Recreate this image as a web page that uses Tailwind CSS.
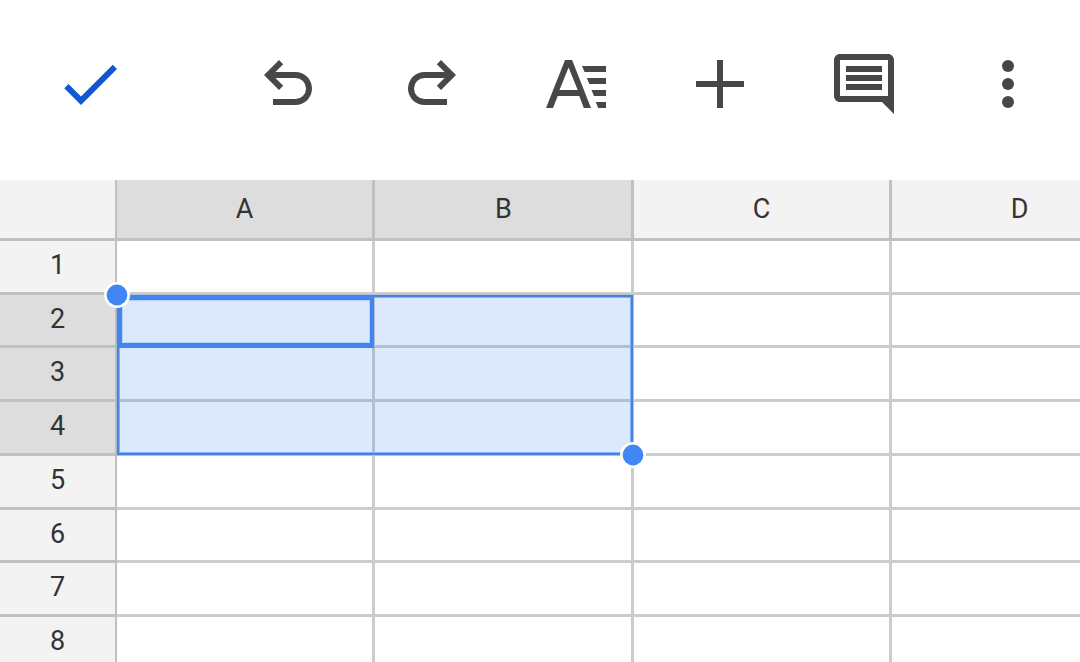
<!DOCTYPE html>
<html lang="en">
<head>
    <meta charset="UTF-8">
    <title>Sheet</title>
    <script src="https://cdn.jsdelivr.net/npm/@tailwindcss/browser@4"></script>
</head>
<body class="w-[1080px] h-[662px] overflow-hidden bg-white font-[Roboto,sans-serif] text-[27px] text-[#333]">
    <!-- toolbar -->
    <div class="flex items-center gap-[72px] h-[180px] pl-[54px] pb-3 text-[#464847]">
        <svg class="size-[72px] shrink-0 mr-[54px] text-[#1058cf]" viewBox="0 0 24 24" fill="currentColor">
            <path d="M9 16.17 4.83 12l-1.42 1.41L9 19 21 7l-1.41-1.41z"/>
        </svg>
        <svg class="size-[72px] shrink-0" viewBox="0 0 24 24" fill="currentColor">
            <path d="M7 19v-2h7.5a3.5 3.5 0 0 0 0-7H7.8l2.6 2.6L9 14 4 9l5-5 1.4 1.4L7.8 8h6.7a5.5 5.5 0 0 1 0 11z"/>
        </svg>
        <svg class="size-[72px] shrink-0" viewBox="0 0 24 24" fill="currentColor">
            <path d="M17 19v-2H9.5a3.5 3.5 0 0 1 0-7h6.7l-2.6 2.6L15 14l5-5-5-5-1.4 1.4L16.2 8H9.5a5.5 5.5 0 0 0 0 11z"/>
        </svg>
        <svg class="size-[72px] shrink-0" viewBox="0 0 24 24" fill="currentColor">
            <path fill-rule="evenodd" d="M8.35 4h2.35L17 20h-2.4L13.1 16H5.9L4.35 20H2zM9.53 6.5 6.5 14h6.06z"/>
            <path d="M14 6h8v2h-7.15zM15.6 10H22v2h-5.55zM17.15 14H22v2h-4zM18.6 18H22v2h-2.6z"/>
        </svg>
        <svg class="size-[72px] shrink-0" viewBox="0 0 24 24" fill="currentColor">
            <path d="M11 4h2v7h7v2h-7v7h-2v-7H4v-2h7z"/>
        </svg>
        <svg class="size-[72px] shrink-0" viewBox="0 0 24 24" fill="currentColor">
            <path fill-rule="evenodd" d="M22 4c0-1.1-.9-2-2-2H4c-1.1 0-2 .9-2 2v12c0 1.1.9 2 2 2h14l4 4zM20 4v12H4V4zM6 6h12v2H6zM6 9h12v2H6zM6 12h12v2H6z"/>
        </svg>
        <svg class="size-[72px] shrink-0" viewBox="0 0 24 24" fill="currentColor">
            <circle cx="12" cy="6" r="2"/>
            <circle cx="12" cy="12" r="2"/>
            <circle cx="12" cy="18" r="2"/>
        </svg>
    </div>

    <!-- sheet -->
    <div class="relative w-full h-[482px] overflow-hidden">
        <div class="grid grid-cols-[117px_258px_259px_258px_258px] grid-rows-[61px_54px_53px_54px_54px_54px_53px_54px_54px] leading-none *:flex *:items-center *:justify-center *:border-b-3 *:border-r-3 *:border-[#ccc]">
            <div class="border-r-2! border-[#c0c0c0]! bg-[#f3f3f3]"></div>
            <div class="border-[#c0c0c0]! bg-[#ddd]">A</div>
            <div class="border-[#c0c0c0]! bg-[#ddd] pl-px">B</div>
            <div class="border-[#c0c0c0]! bg-[#f3f3f3]">C</div>
            <div class="border-[#c0c0c0]! bg-[#f3f3f3]">D</div>

            <div class="border-r-2! border-[#c0c0c0]! bg-[#f3f3f3] pb-0.5">1</div>
            <div></div><div></div><div></div><div></div>

            <div class="border-r-2! border-[#c0c0c0]! bg-[#ddd] pb-0.5">2</div>
            <div></div><div></div><div></div><div></div>

            <div class="border-r-2! border-[#c0c0c0]! bg-[#ddd] pb-0.5">3</div>
            <div></div><div></div><div></div><div></div>

            <div class="border-r-2! border-[#c0c0c0]! bg-[#ddd] pb-0.5">4</div>
            <div></div><div></div><div></div><div></div>

            <div class="border-r-2! border-[#c0c0c0]! bg-[#f3f3f3] pb-0.5">5</div>
            <div></div><div></div><div></div><div></div>

            <div class="border-r-2! border-[#c0c0c0]! bg-[#f3f3f3] pb-0.5">6</div>
            <div></div><div></div><div></div><div></div>

            <div class="border-r-2! border-[#c0c0c0]! bg-[#f3f3f3] pb-0.5">7</div>
            <div></div><div></div><div></div><div></div>

            <div class="border-r-2! border-[#c0c0c0]! bg-[#f3f3f3] pb-0.5">8</div>
            <div></div><div></div><div></div><div></div>
        </div>

        <!-- selected range A2:B4 -->
        <div class="absolute left-[116px] top-[114px] w-[518px] h-[162px] bg-[#478bef]/19"></div>
        <div class="absolute left-[117px] top-[115px] w-[516px] h-[160px] border-2 border-[#4c83da] inset-ring inset-ring-[#7fb0fa]"></div>
        <!-- active cell -->
        <div class="absolute left-[117px] top-[115px] w-[257px] h-[53px] border-5 border-r-4 border-[#4285ee] inset-ring inset-ring-[#b4d2fa]"></div>
        <!-- drag handles -->
        <svg class="absolute left-[104px] top-[102px] size-[26px]" viewBox="0 0 26 26">
            <circle cx="13" cy="13" r="13" fill="#fff"/>
            <circle cx="13" cy="13" r="10.4" fill="#4285f4"/>
        </svg>
        <svg class="absolute left-[620px] top-[262px] size-[26px]" viewBox="0 0 26 26">
            <circle cx="13" cy="13" r="13" fill="#fff"/>
            <circle cx="13" cy="13" r="10.4" fill="#4285f4"/>
        </svg>
    </div>
</body>
</html>
